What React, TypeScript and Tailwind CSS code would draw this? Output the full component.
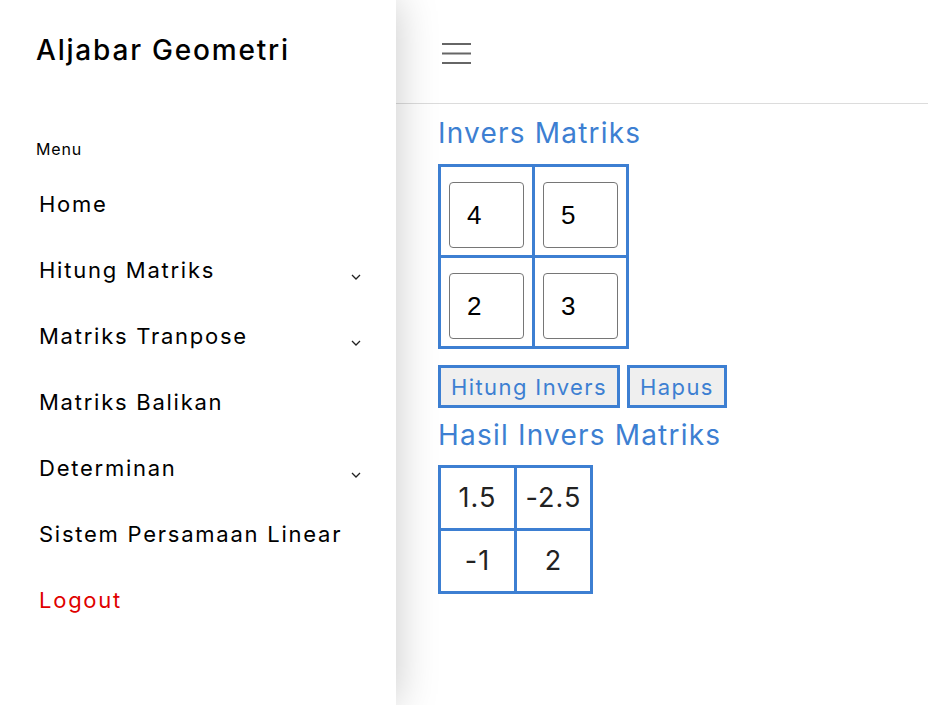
import { type ReactNode } from 'react';

const font = { fontFamily: 'Inter, "Noto Sans", sans-serif' };

/** Sidebar menu entries */
const menu: { label: string; dropdown?: boolean; danger?: boolean }[] = [
  { label: 'Home' },
  { label: 'Hitung Matriks', dropdown: true },
  { label: 'Matriks Tranpose', dropdown: true },
  { label: 'Matriks Balikan' },
  { label: 'Determinan', dropdown: true },
  { label: 'Sistem Persamaan Linear' },
  { label: 'Logout', danger: true },
];

function Chevron() {
  return (
    <svg className="w-[12px] h-[8px] text-[#222]" viewBox="0 0 12 8" fill="none" aria-hidden="true">
      <path d="M2 2l4 4 4-4" stroke="currentColor" strokeWidth={1.3} />
    </svg>
  );
}

function Sidebar() {
  return (
    <aside className="relative z-10 w-[396px] shrink-0 bg-white shadow-[0_0_40px_rgba(0,0,0,0.22)] pl-[36px] pr-[34px]">
      <h1 className="pt-[31px] text-[28px] leading-[38px] font-medium tracking-[1.8px] text-black">
        Aljabar Geometri
      </h1>
      <div className="mt-[70px] text-[16px] leading-[20px] tracking-[0.8px] text-black">Menu</div>
      <nav className="mt-[12px] pl-[3px] flex flex-col">
        {menu.map((m) => (
          <a
            key={m.label}
            href="#"
            className={`h-[66px] flex items-center justify-between text-[22px] leading-[28px] tracking-[1.75px] ${
              m.danger ? 'text-[#e00000]' : 'text-black'
            }`}
          >
            <span>{m.label}</span>
            {m.dropdown && (
              <span className="pt-[14px]">
                <Chevron />
              </span>
            )}
          </a>
        ))}
      </nav>
    </aside>
  );
}

function InputCell({ value }: { value: string }) {
  return (
    <td className="border-[3px] border-[#3d7fd2] px-[8px] pt-[15px] pb-[7px]">
      <div
        className="w-[75px] h-[66px] rounded-[4px] border border-[#767676] bg-white flex items-center pl-[17px] text-[26px] text-black"
        style={{ fontFamily: '"Liberation Sans", Arial, sans-serif' }}
      >
        {value}
      </div>
    </td>
  );
}

function ResultCell({ children }: { children: ReactNode }) {
  return (
    <td className="border-[3px] border-[#3d7fd2] w-[76px] h-[63px] text-center text-[27px] tracking-[1px] text-[#222]">
      {children}
    </td>
  );
}

function Button({ children }: { children: ReactNode }) {
  return (
    <button className="h-[43px] px-[10px] bg-[#efefef] border-[3px] border-[#3d7fd2] text-[22px] leading-[28px] tracking-[1.4px] text-[#3d7fd2]">
      {children}
    </button>
  );
}

export default function App() {
  return (
    <div className="flex min-h-[705px] bg-white" style={font}>
      <Sidebar />
      <main className="flex-1 flex flex-col">
        <header className="h-[104px] border-b border-[#dcdcdc] flex items-center pl-[46px]">
          <svg className="mt-[5px] w-[29px] h-[24px] text-[#666]" viewBox="0 0 29 24" aria-hidden="true">
            <path d="M0 2h29M0 11.5h29M0 21h29" stroke="currentColor" strokeWidth={2.2} />
          </svg>
        </header>
        <section className="pl-[42px] pt-[10px]">
          <h2 className="text-[28px] leading-[38px] tracking-[1.2px] text-[#3d7fd2]">Invers Matriks</h2>
          <table className="mt-[12px] border-collapse">
            <tbody>
              <tr>
                <InputCell value="4" />
                <InputCell value="5" />
              </tr>
              <tr>
                <InputCell value="2" />
                <InputCell value="3" />
              </tr>
            </tbody>
          </table>
          <div className="mt-[16px] flex gap-[7px]">
            <Button>Hitung Invers</Button>
            <Button>Hapus</Button>
          </div>
          <h2 className="mt-[8px] text-[28px] leading-[38px] tracking-[1.2px] text-[#3d7fd2]">
            Hasil Invers Matriks
          </h2>
          <table className="mt-[11px] border-collapse">
            <tbody>
              <tr>
                <ResultCell>1.5</ResultCell>
                <ResultCell>-2.5</ResultCell>
              </tr>
              <tr>
                <ResultCell>-1</ResultCell>
                <ResultCell>2</ResultCell>
              </tr>
            </tbody>
          </table>
        </section>
      </main>
    </div>
  );
}
